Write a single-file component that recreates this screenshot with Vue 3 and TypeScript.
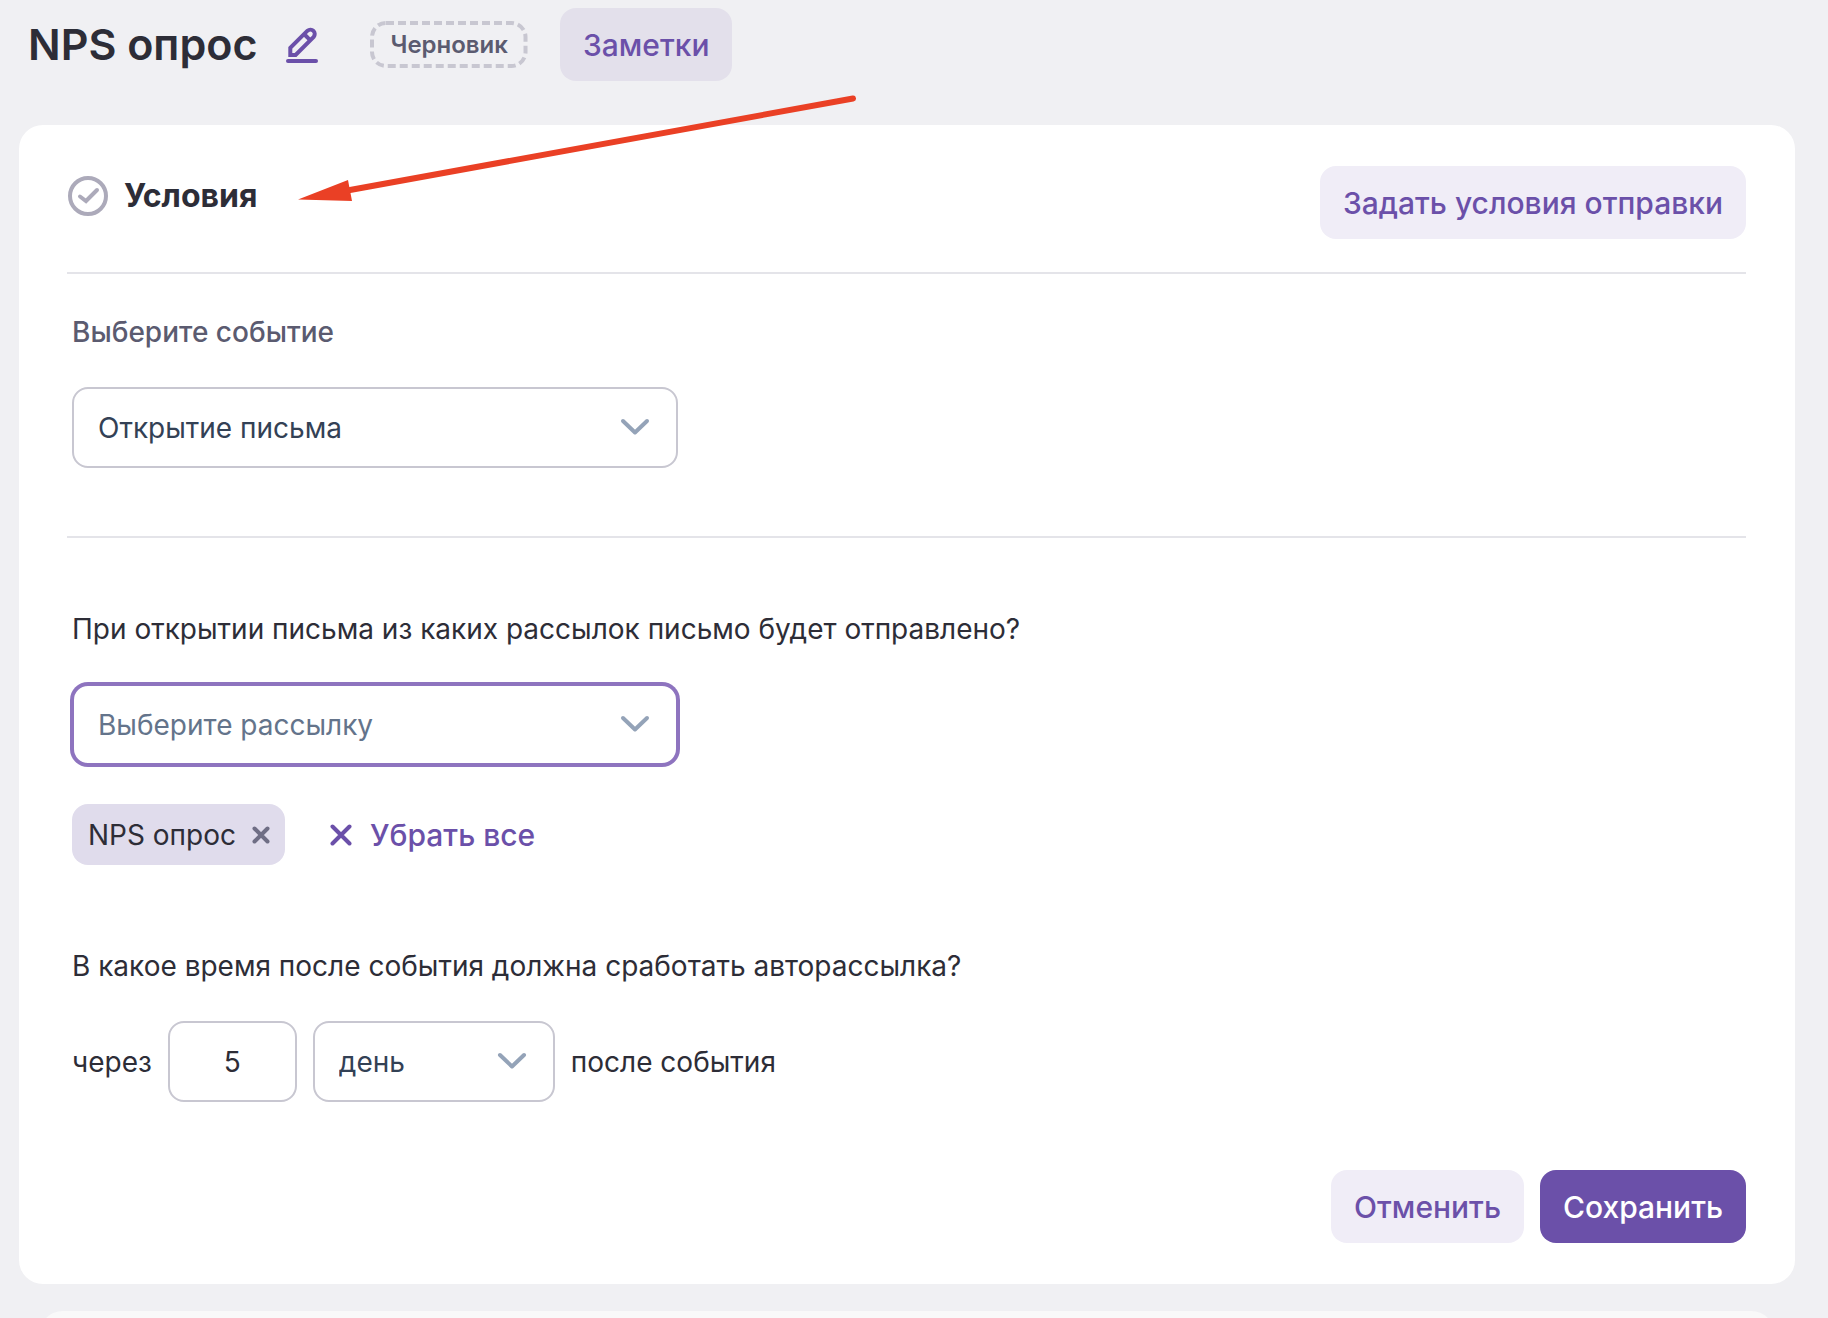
<script setup lang="ts">
import { ref } from 'vue'

const eventType = ref('open')
const mailing = ref('')
const delay = ref('5')
const unit = ref('day')
const chips = ref<string[]>(['NPS опрос'])

function removeChip(name: string) {
  chips.value = chips.value.filter((c) => c !== name)
}
</script>

<template>
  <main class="page">
    <header class="top">
      <h1 class="title">NPS опрос</h1>
      <button class="edit" type="button" aria-label="Переименовать">
        <svg width="32" height="36" viewBox="0 0 32 36" fill="none" stroke="currentColor" stroke-width="4">
          <path d="M4.300 28V20.900L21.500 3.700A4.400 4.400 0 0 1 27.700 9.900L9.600 28Z" stroke-linejoin="miter" />
          <path d="M18 7L24.400 13.400" />
          <path d="M2 34H30" stroke-linecap="round" />
        </svg>
      </button>
      <span class="badge">
        <svg class="dash" aria-hidden="true"><rect class="dash-rect" x="2" y="2" rx="14" /></svg>
        Черновик
      </span>
      <button class="btn notes" type="button">Заметки</button>
    </header>

    <section class="card">
      <div class="card-head">
        <h2 class="card-title">
          <svg width="41" height="40" viewBox="0 0 41 40" fill="none" stroke="#acaaba" stroke-width="4">
            <circle cx="21" cy="20" r="18" />
            <path d="M13 20.500L19 25L30 14" stroke-linecap="round" />
          </svg>
          Условия
        </h2>
        <button class="btn soft" type="button">Задать условия отправки</button>
      </div>

      <div class="block event">
        <label class="label muted" for="event">Выберите событие</label>
        <div class="select wide">
          <select id="event" v-model="eventType">
            <option value="open">Открытие письма</option>
          </select>
          <svg class="chevron" width="30" height="18" viewBox="0 0 30 18"><path d="M3 3L15 14.500L27 3" /></svg>
        </div>
      </div>

      <div class="block">
        <label class="label" for="mailing">При открытии письма из каких рассылок письмо будет отправлено?</label>
        <div class="select wide active">
          <select id="mailing" v-model="mailing">
            <option value="">Выберите рассылку</option>
          </select>
          <svg class="chevron" width="30" height="18" viewBox="0 0 30 18"><path d="M3 3L15 14.500L27 3" /></svg>
        </div>
        <div class="chips">
          <span v-for="chip in chips" :key="chip" class="chip">
            {{ chip }}
            <button class="plain" type="button" aria-label="Убрать" @click="removeChip(chip)">
              <svg width="18" height="18" viewBox="0 0 18 18"><path d="M2.500 2.500L15.500 15.500M15.500 2.500L2.500 15.500" /></svg>
            </button>
          </span>
          <button class="plain clear" type="button" @click="chips = []">
            <svg width="22" height="22" viewBox="0 0 22 22"><path d="M2.500 2.500L19.500 19.500M19.500 2.500L2.500 19.500" /></svg>
            Убрать все
          </button>
        </div>

        <p class="label">В какое время после события должна сработать авторассылка?</p>
        <div class="delay">
          <label for="delay">через</label>
          <input id="delay" v-model="delay" class="number" type="text" inputmode="numeric" />
          <div class="select unit">
            <select v-model="unit" aria-label="Единица времени">
              <option value="day">день</option>
            </select>
            <svg class="chevron" width="30" height="18" viewBox="0 0 30 18"><path d="M3 3L15 14.500L27 3" /></svg>
          </div>
          <span>после события</span>
        </div>
      </div>

      <footer class="actions">
        <button class="btn soft" type="button">Отменить</button>
        <button class="btn primary" type="button">Сохранить</button>
      </footer>
    </section>

    <section class="next-card"></section>

    <svg class="arrow" width="560" height="110" viewBox="0 0 560 110" aria-hidden="true">
      <path d="M52 99L555 7.500" stroke="#ea4025" stroke-width="6" stroke-linecap="round" />
      <path d="M0 108.500L50 89L54 110Z" fill="#ea4025" />
    </svg>
  </main>
</template>

<style>
body {
  margin: 0;
  background: #f0f0f3;
}
</style>

<style scoped>
.page {
  position: relative;
  height: 100vh;
  overflow: hidden;
  font-family: Inter, "Noto Sans", sans-serif;
  font-size: 28px;
  line-height: 36px;
  color: #2d2d37;
}
button,
input,
select {
  font: inherit;
  box-sizing: border-box;
  margin: 0;
}
button {
  border: 0;
  cursor: pointer;
}
svg {
  display: block;
  flex: none;
}
h1,
h2,
p {
  margin: 0;
}
.top {
  display: flex;
  align-items: center;
  padding: 8px 28px 0;
}
.title {
  font-size: 43px;
  line-height: 73px;
  font-weight: 600;
}
.edit {
  margin-left: 29px;
  padding: 0;
  background: none;
  color: #6b50a9;
}
.badge {
  position: relative;
  margin-left: 52px;
  padding: 0 20px;
  font-size: 24px;
  line-height: 47px;
  font-weight: 600;
  color: #5b5b70;
}
.dash {
  position: absolute;
  inset: 0;
  width: 100%;
  height: 100%;
}
.dash-rect {
  width: calc(100% - 4px);
  height: calc(100% - 4px);
  fill: none;
  stroke: #c8c7d1;
  stroke-width: 4px;
  stroke-dasharray: 8 4;
}
.btn {
  height: 73px;
  padding: 0 23px;
  border-radius: 16px;
  font-size: 30px;
  font-weight: 500;
  white-space: nowrap;
}
.notes {
  margin-left: 32px;
  background: #e3e0eb;
  color: #6b50a9;
}
.soft {
  background: #f0edf7;
  color: #6b50a9;
}
.primary {
  background: #6b50a9;
  color: #fff;
}
.card {
  margin: 44px 33px 0 19px;
  padding: 41px 49px 41px 48px;
  border-radius: 24px;
  background: #fff;
}
.card-head {
  display: flex;
  justify-content: space-between;
  align-items: flex-start;
  padding-bottom: 33px;
  border-bottom: 2px solid #e4e4e9;
}
.card-title {
  display: flex;
  align-items: center;
  gap: 16px;
  padding-top: 10px;
  font-size: 32px;
  line-height: 40px;
  font-weight: 700;
}
.block {
  padding: 73px 5px 0;
}
.event {
  padding: 40px 5px 68px;
  border-bottom: 2px solid #e4e4e9;
}
.label {
  display: block;
  margin-bottom: 37px;
}
.muted {
  color: #5b5b70;
  font-weight: 500;
}
.select {
  position: relative;
}
.wide {
  width: 606px;
}
.unit {
  width: 242px;
}
.select select,
.number {
  width: 100%;
  height: 81px;
  padding: 0 24px;
  border: 2px solid #c8c7d1;
  border-radius: 16px;
  background: #fff;
  color: #334155;
  appearance: none;
  outline: none;
}
.active select {
  border-color: #8e74bf;
  color: #64748b;
  box-shadow: 0 0 0 2px #8e74bf;
}
.chevron {
  position: absolute;
  right: 28px;
  top: 31px;
  fill: none;
  stroke: #94a3b8;
  stroke-width: 4;
  stroke-linecap: round;
  stroke-linejoin: round;
  pointer-events: none;
}
.chips {
  display: flex;
  align-items: center;
  gap: 45px;
  margin: 39px 0 83px;
}
.chip {
  display: flex;
  align-items: center;
  gap: 16px;
  height: 61px;
  padding: 0 15px 0 16px;
  border-radius: 16px;
  background: #e0dcec;
}
.plain {
  display: flex;
  align-items: center;
  padding: 0;
  background: none;
  color: #6f6e85;
}
.plain svg {
  fill: none;
  stroke: currentColor;
  stroke-width: 4;
  stroke-linecap: round;
}
.clear {
  gap: 18px;
  font-size: 30px;
  font-weight: 500;
  color: #6b50a9;
}
.delay {
  display: flex;
  align-items: center;
  gap: 16px;
}
.number {
  width: 129px;
  color: #2d2d37;
  text-align: center;
}
.actions {
  display: flex;
  justify-content: flex-end;
  gap: 16px;
  padding-top: 68px;
}
.next-card {
  height: 120px;
  margin: 27px 53px 0 39px;
  border-radius: 24px;
  background: #f9f9f9;
}
.arrow {
  position: absolute;
  left: 298px;
  top: 91px;
  pointer-events: none;
}
</style>
